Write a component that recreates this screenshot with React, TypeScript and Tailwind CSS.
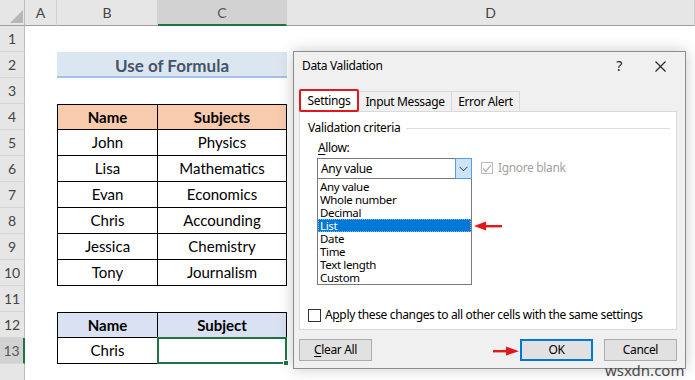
import React from "react";

const data: [string, string][] = [
  ["John", "Physics"],
  ["Lisa", "Mathematics"],
  ["Evan", "Economics"],
  ["Chris", "Accounding"],
  ["Jessica", "Chemistry"],
  ["Tony", "Journalism"],
];

function RightArrow() {
  return (
    <svg width="26" height="10" viewBox="0 0 26 10">
      <rect x="0" y="4" width="15" height="2.4" fill="#e3161c" />
      <polygon points="13,0.5 26,5.2 13,9.5" fill="#e3161c" />
    </svg>
  );
}

function LeftArrow() {
  return (
    <svg width="28" height="10" viewBox="0 0 28 10">
      <polygon points="0,5 12,0.5 12,9.5" fill="#e3161c" />
      <rect x="10" y="4" width="18" height="2.4" fill="#e3161c" />
    </svg>
  );
}

export default function App() {
  const cells: React.ReactNode[] = [];
  const rh =
    "flex items-center justify-center bg-[#e6e6e6] border-r border-r-[#bdbdbd] border-b border-b-[#d6d6d6] text-[14px] text-[#444]";
  const ch =
    "flex items-center justify-center bg-[#e6e6e6] border-r border-r-[#d0d0d0] border-b border-b-[#9f9f9f] text-[14px] text-[#444]";

  cells.push(
    <div key="corner" className="relative bg-[#e6e6e6] border-r border-r-[#bdbdbd] border-b border-b-[#9f9f9f]">
      <svg className="absolute left-[10px] top-[10px]" width="13" height="13" viewBox="0 0 13 13">
        <polygon points="13,0 13,13 0,13" fill="#b6b6b6" />
      </svg>
    </div>
  );
  cells.push(<div key="hA" className={ch}>A</div>);
  cells.push(<div key="hB" className={ch}>B</div>);
  cells.push(
    <div
      key="hC"
      className="flex items-center justify-center bg-[#d2d2d2] border-r border-r-[#d0d0d0] border-b-2 border-b-[#217346] text-[14px] text-[#555]"
    >
      C
    </div>
  );
  cells.push(<div key="hD" className={ch}>D</div>);

  const td = "flex items-center justify-center text-[15px] text-black";
  for (let r = 1; r <= 14; r++) {
    cells.push(
      <div
        key={"r" + r}
        className={
          r === 13
            ? "flex items-center justify-center bg-[#d2d2d2] border-r-2 border-r-[#217346] border-b border-b-[#d6d6d6] text-[14px] text-[#555]"
            : rh
        }
      >
        {r < 14 ? r : ""}
      </div>
    );
    cells.push(<div key={"a" + r} />);
    if (r === 2) {
      cells.push(
        <div
          key="title"
          className="col-span-2 flex items-center justify-center pt-[3px] bg-[#dce6f1] border-b-2 border-b-[#9dc3e6] text-[17px] font-bold text-[#44546a]"
        >
          Use of Formula
        </div>
      );
    } else if (r === 4) {
      cells.push(
        <div key="b4" className={td + " font-bold bg-[#f8cbad] border border-black"}>Name</div>,
        <div key="c4" className={td + " font-bold bg-[#f8cbad] border-t border-r border-b border-black"}>Subjects</div>
      );
    } else if (r >= 5 && r <= 10) {
      const [n, s] = data[r - 5];
      cells.push(
        <div key={"b" + r} className={td + " border-l border-r border-b border-black"}>{n}</div>,
        <div key={"c" + r} className={td + " border-r border-b border-black"}>{s}</div>
      );
    } else if (r === 12) {
      cells.push(
        <div key="b12" className={td + " font-bold bg-[#d9e1f2] border border-black"}>Name</div>,
        <div key="c12" className={td + " font-bold bg-[#d9e1f2] border-t border-r border-b border-black"}>Subject</div>
      );
    } else if (r === 13) {
      cells.push(
        <div key="b13" className={td + " border-l border-r border-b border-black"}>Chris</div>,
        <div key="c13" className="relative border-r border-b border-black">
          <div className="absolute -left-[1px] -top-[1px] -right-[1px] -bottom-[1px] border-2 border-[#217346]" />
          <div className="absolute -right-[3px] -bottom-[3px] w-[6px] h-[6px] bg-[#217346] border border-white" />
        </div>
      );
    } else {
      cells.push(<div key={"b" + r} />, <div key={"c" + r} />);
    }
    cells.push(<div key={"d" + r} />);
  }

  return (
    <div className="relative w-[695px] h-[380px] overflow-hidden bg-white font-['Lato','Liberation_Sans',sans-serif]">
      <div className="grid grid-cols-[25px_32px_101px_129px_1fr] grid-rows-[26px_repeat(14,26px)]">
        {cells}
      </div>

      {/* Dialog */}
      <div className="absolute left-[293px] top-[51px] w-[393px] h-[318px] flex flex-col bg-[#f0f0f0] border border-[#8c8c8c] shadow-[0_0_14px_rgba(0,0,0,0.22)] font-['Noto_Sans',sans-serif] text-[12px] leading-[16px] tracking-[-0.35px] text-black">
        <div className="h-[28px] flex items-center pl-[8px] shrink-0">
          <span>Data Validation</span>
          <span className="ml-auto text-[14px] text-[#222]">?</span>
          <svg className="ml-[33px] mr-[19px]" width="11" height="11" viewBox="0 0 11 11">
            <path d="M0.5 0.5 L10.5 10.5 M10.5 0.5 L0.5 10.5" stroke="#222" strokeWidth="1.1" fill="none" />
          </svg>
        </div>

        <div className="mt-[9px] ml-[5px] flex items-end h-[22px] shrink-0">
          <div className="relative z-10 h-[23px] w-[60px] -mb-[1px] flex items-center justify-center bg-white border-2 border-[#e3161c] rounded-[2px]">
            Settings
          </div>
          <div className="h-[20px] w-[93px] flex items-center justify-center border-t border-r border-[#d9d9d9] bg-[#f0f0f0]">
            Input Message
          </div>
          <div className="h-[20px] w-[68px] flex items-center justify-center border-t border-r border-[#d9d9d9] bg-[#f0f0f0]">
            Error Alert
          </div>
        </div>

        <div className="ml-[5px] mr-[8px] h-[219px] shrink-0 bg-white border border-[#d9d9d9] flex flex-col pl-[8px] pt-[8px]">
          <div className="flex items-center h-[16px]">
            <span>Validation criteria</span>
            <div className="flex-1 h-px bg-[#dcdcdc] ml-[6px] mr-[6px]" />
          </div>
          <div className="mt-[4px] ml-[10px] h-[16px]">
            <span className="underline underline-offset-2">A</span>llow:
          </div>
          <div className="mt-[2px] ml-[9px] flex items-start">
            <div className="w-[155px] flex flex-col">
              <div className="h-[21px] flex items-center border border-[#7a7a7a]">
                <span className="pl-[3px]">Any value</span>
                <div className="ml-auto w-[17px] h-[21px] -mr-px -my-px flex items-center justify-center bg-[#cce4f7] border border-[#569de5]">
                  <svg width="9" height="6" viewBox="0 0 9 6">
                    <path d="M0.5 0.8 L4.5 4.8 L8.5 0.8" stroke="#333" strokeWidth="1" fill="none" />
                  </svg>
                </div>
              </div>
              <div className="h-[106px] border border-t-0 border-[#7a7a7a] pt-px text-[11.5px] leading-[13px]">
                <div className="h-[13px] pl-[2px]">Any value</div>
                <div className="h-[13px] pl-[2px]">Whole number</div>
                <div className="h-[13px] pl-[2px]">Decimal</div>
                <div className="relative h-[13px] pl-[2px] bg-[#0078d7] text-white outline-1 outline-dotted outline-[#7fb6e6] -outline-offset-1">
                  List
                  <div className="absolute left-[calc(100%+3px)] top-[2px]">
                    <LeftArrow />
                  </div>
                </div>
                <div className="h-[13px] pl-[2px]">Date</div>
                <div className="h-[13px] pl-[2px]">Time</div>
                <div className="h-[13px] pl-[2px]">Text length</div>
                <div className="h-[13px] pl-[2px]">Custom</div>
              </div>
            </div>
            <div className="ml-[9px] mt-[2px] flex items-center">
              <div className="w-[12px] h-[12px] border border-[#bcbcbc] flex items-center justify-center">
                <svg width="10" height="9" viewBox="0 0 10 9">
                  <path d="M1 4.5 L3.8 7.5 L9 1.2" stroke="#b0b0b0" strokeWidth="1.2" fill="none" />
                </svg>
              </div>
              <span className="ml-[5px] text-[#a3a3a3]">Ignore blank</span>
            </div>
          </div>
          <div className="mt-[22px] flex items-center h-[16px]">
            <div className="w-[13px] h-[13px] border border-[#333] bg-white" />
            <span className="ml-[4px]">
              A<span className="underline underline-offset-2">p</span>ply these changes to all other cells with the same settings
            </span>
          </div>
        </div>

        <div className="mt-[9px] ml-[5px] mr-[8px] flex items-center h-[22px] shrink-0">
          <div className="w-[73px] h-[22px] flex items-center justify-center bg-[#e1e1e1] border border-[#adadad]">
            <span className="underline underline-offset-2">C</span>lear All
          </div>
          <div className="relative ml-auto w-[73px] h-[22px] flex items-center justify-center bg-[#e1e1e1] border-2 border-[#0078d7]">
            OK
            <div className="absolute right-[calc(100%+3px)] top-[5px]">
              <RightArrow />
            </div>
          </div>
          <div className="ml-[11px] w-[73px] h-[22px] flex items-center justify-center bg-[#e1e1e1] border border-[#adadad]">
            Cancel
          </div>
        </div>
      </div>

      <div className="absolute left-[605px] top-[362px] text-[15px] text-[#4a4a4a] font-['Noto_Sans',sans-serif] leading-[16px]">
        wsxdn.com
      </div>
    </div>
  );
}
